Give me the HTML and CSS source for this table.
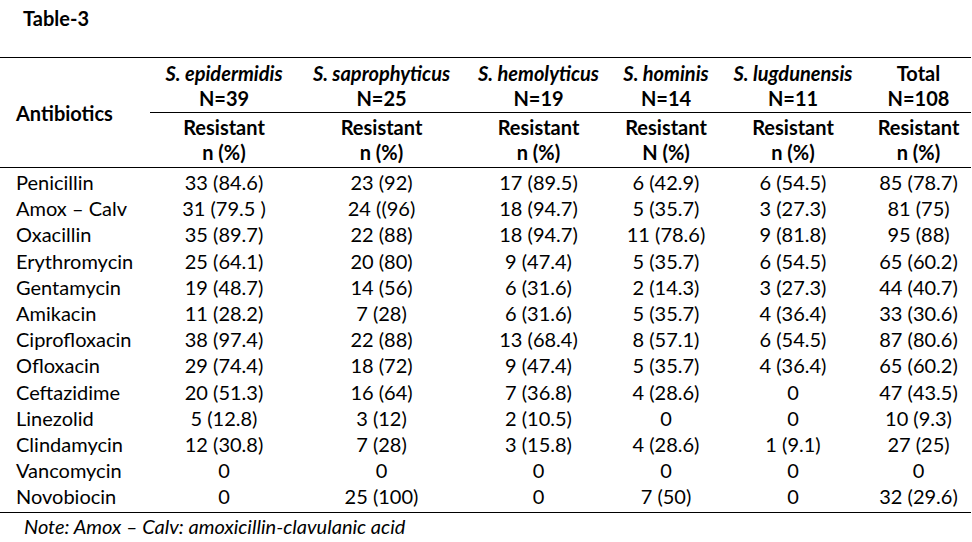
FILE: index.html
```html
<!DOCTYPE html>
<html>
<head>
<meta charset="utf-8">
<link rel="stylesheet" href="styles.css">
</head>
<body>
<div class="page">
  <div class="title">Table-3</div>
  <table class="tbl">
    <colgroup>
      <col class="c0"><col class="c1"><col class="c2"><col class="c3"><col class="c4"><col class="c5"><col class="c6">
    </colgroup>
    <thead>
      <tr class="h1">
        <th rowspan="2" class="name-h">Antibiotics</th>
        <th><i>S. epidermidis</i><br>N=39</th>
        <th><i>S. saprophyticus</i><br>N=25</th>
        <th><i>S. hemolyticus</i><br>N=19</th>
        <th><i>S. hominis</i><br>N=14</th>
        <th><i>S. lugdunensis</i><br>N=11</th>
        <th>Total<br>N=108</th>
      </tr>
      <tr class="h2">
        <th>Resistant<br>n (%)</th>
        <th>Resistant<br>n (%)</th>
        <th>Resistant<br>n (%)</th>
        <th>Resistant<br>N (%)</th>
        <th>Resistant<br>n (%)</th>
        <th>Resistant<br>n (%)</th>
      </tr>
    </thead>
    <tbody>
      <tr class="first"><td class="name">Penicillin</td><td>33 (84.6)</td><td>23 (92)</td><td>17 (89.5)</td><td>6 (42.9)</td><td>6 (54.5)</td><td>85 (78.7)</td></tr>
      <tr><td class="name">Amox – Calv</td><td>31 (79.5 )</td><td>24 ((96)</td><td>18 (94.7)</td><td>5 (35.7)</td><td>3 (27.3)</td><td>81 (75)</td></tr>
      <tr><td class="name">Oxacillin</td><td>35 (89.7)</td><td>22 (88)</td><td>18 (94.7)</td><td>11 (78.6)</td><td>9 (81.8)</td><td>95 (88)</td></tr>
      <tr><td class="name">Erythromycin</td><td>25 (64.1)</td><td>20 (80)</td><td>9 (47.4)</td><td>5 (35.7)</td><td>6 (54.5)</td><td>65 (60.2)</td></tr>
      <tr><td class="name">Gentamycin</td><td>19 (48.7)</td><td>14 (56)</td><td>6 (31.6)</td><td>2 (14.3)</td><td>3 (27.3)</td><td>44 (40.7)</td></tr>
      <tr><td class="name">Amikacin</td><td>11 (28.2)</td><td>7 (28)</td><td>6 (31.6)</td><td>5 (35.7)</td><td>4 (36.4)</td><td>33 (30.6)</td></tr>
      <tr><td class="name">Ciprofloxacin</td><td>38 (97.4)</td><td>22 (88)</td><td>13 (68.4)</td><td>8 (57.1)</td><td>6 (54.5)</td><td>87 (80.6)</td></tr>
      <tr><td class="name">Ofloxacin</td><td>29 (74.4)</td><td>18 (72)</td><td>9 (47.4)</td><td>5 (35.7)</td><td>4 (36.4)</td><td>65 (60.2)</td></tr>
      <tr><td class="name">Ceftazidime</td><td>20 (51.3)</td><td>16 (64)</td><td>7 (36.8)</td><td>4 (28.6)</td><td>0</td><td>47 (43.5)</td></tr>
      <tr><td class="name">Linezolid</td><td>5 (12.8)</td><td>3 (12)</td><td>2 (10.5)</td><td>0</td><td>0</td><td>10 (9.3)</td></tr>
      <tr><td class="name">Clindamycin</td><td>12 (30.8)</td><td>7 (28)</td><td>3 (15.8)</td><td>4 (28.6)</td><td>1 (9.1)</td><td>27 (25)</td></tr>
      <tr><td class="name">Vancomycin</td><td>0</td><td>0</td><td>0</td><td>0</td><td>0</td><td>0</td></tr>
      <tr class="last"><td class="name">Novobiocin</td><td>0</td><td>25 (100)</td><td>0</td><td>7 (50)</td><td>0</td><td>32 (29.6)</td></tr>
    </tbody>
  </table>
  <div class="note">Note: Amox – Calv: amoxicillin-clavulanic acid</div>
</div>
</body>
</html>
```
FILE: styles.css
```css
html, body {
  margin: 0;
  padding: 0;
  background: #fff;
}
.page {
  width: 972px;
  font-family: "Lato", "Open Sans", sans-serif;
  font-size: 20px;
  color: #000;
}
.title {
  font-weight: bold;
  padding: 6px 0 0 23px;
  height: 57px;
  box-sizing: border-box;
  line-height: 24px;
}
.tbl {
  width: 971px;
  table-layout: fixed;
  border-collapse: collapse;
  border-top: 1px solid #000;
  border-bottom: 1px solid #000;
}
.c0 { width: 150px; }
.c1 { width: 148px; }
.c2 { width: 167px; }
.c3 { width: 147px; }
.c4 { width: 108px; }
.c5 { width: 146px; }
.c6 { width: 105px; }
.tbl th, .tbl td {
  padding: 0;
  text-align: center;
  white-space: nowrap;
}
.tbl th {
  font-weight: bold;
  line-height: 25px;
}
.tbl th i { font-weight: bold; }
.h1 th {
  padding: 3px 0 1px;
  border-bottom: 1px solid #000;
}
.h1 th.name-h {
  text-align: left;
  padding-left: 16px;
  vertical-align: middle;
}
.h2 th {
  padding: 2px 0 2px;
  border-bottom: 1px solid #000;
}
.tbl td {
  height: 26.2px;
  line-height: 26px;
}
.tbl td.name {
  text-align: left;
  padding-left: 16px;
}
.first td { padding-top: 1px; }
.last td { padding-bottom: 3px; }
.note {
  font-style: italic;
  padding-left: 24px;
  line-height: 26px;
}
```
